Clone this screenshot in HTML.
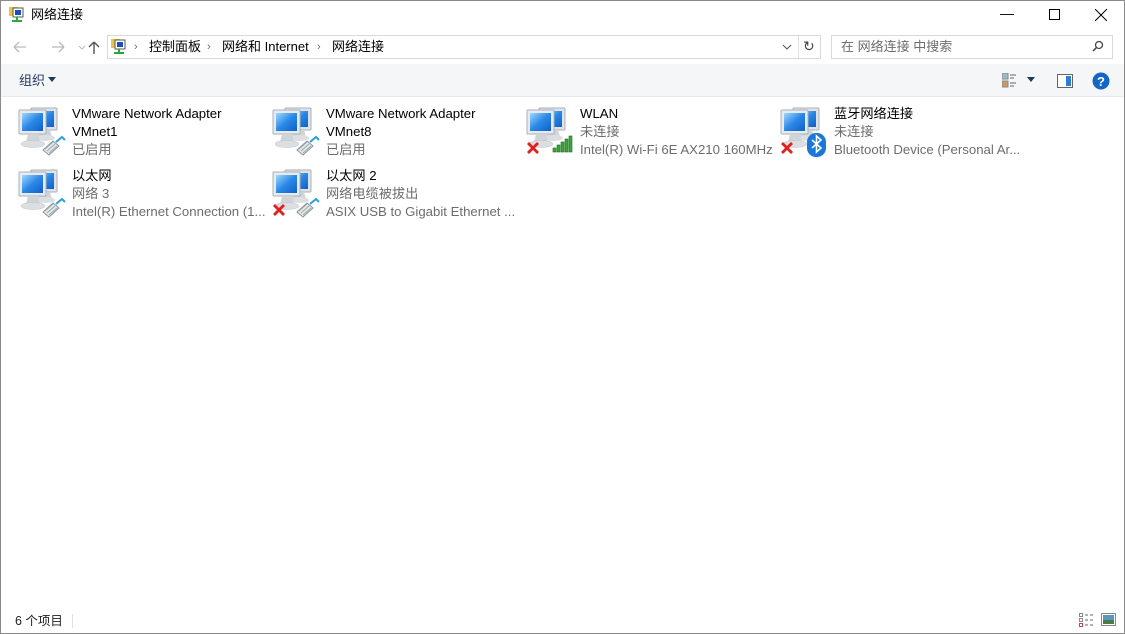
<!DOCTYPE html>
<html><head><meta charset="utf-8"><style>
*{margin:0;padding:0;box-sizing:border-box}
body{width:1125px;height:634px;background:#fff;font-family:"Liberation Sans","Noto Sans CJK SC",sans-serif;font-size:12px;color:#000;position:relative;overflow:hidden}
.abs{position:absolute}
.win{position:absolute;left:0;top:0;width:1125px;height:634px;border:1px solid #8a8a8a}
.t{position:absolute;white-space:nowrap;font-size:13.2px;line-height:18px}
.g{color:#6d6d6d}
</style></head><body>
<div class="win"></div>
<svg width="0" height="0" style="position:absolute">
<defs>
<linearGradient id="scr" x1="0" y1="0" x2="1" y2="1"><stop offset="0" stop-color="#9fd8ff"/><stop offset=".5" stop-color="#2a88e6"/><stop offset="1" stop-color="#1060c8"/></linearGradient>
<g id="mon">
<rect x="15" y="4" width="26" height="22" rx="1" fill="#dfe3e7" stroke="#a8b0b8"/>
<rect x="18" y="7" width="20" height="16" fill="url(#scr)"/>
<path d="M24 26h10l2 7H22z" fill="#cfd4d9"/>
<ellipse cx="29" cy="34" rx="10" ry="3" fill="#dcdfe2"/>
<rect x="3" y="6" width="27" height="24" rx="1" fill="#e8ebee" stroke="#a8b0b8"/>
<rect x="6" y="9" width="21" height="18" fill="url(#scr)"/>
<path d="M12 30h10l2 8H10z" fill="#cfd4d9"/>
<ellipse cx="17" cy="40" rx="12" ry="3.5" fill="#dcdfe2" stroke="#c0c5ca" stroke-width=".5"/>
</g>
<g id="plug">
<path d="M27 46l10-9 6 5-10 9z" fill="#e6e8ea" stroke="#8a939c"/>
<path d="M29 45l8-7M31 47l8-7M33 49l8-7" stroke="#9aa" stroke-width="1"/>
<path d="M40 38l6-5 3 3" fill="none" stroke="#2aa0e0" stroke-width="2"/>
</g>
<g id="x"><path d="M2 0l4 4 4-4 2 2-4 4 4 4-2 2-4-4-4 4-2-2 4-4-4-4z" fill="#e0201f"/></g>
</defs></svg>

<svg class="abs" style="left:8px;top:6px" width="18" height="18"><rect x="1" y="1" width="9" height="9" fill="#e8c54a"/><rect x="5" y="2" width="10" height="9" fill="#fff" stroke="#555"/><rect x="7" y="4" width="6" height="5" fill="#1a4ec0"/><path d="M9 11v4M4 15h10" stroke="#2aa83a" stroke-width="2"/></svg>
<div class="t" style="left:31px;top:6px;font-size:13px">网络连接</div>
<div class="t" style="left:1000px;top:4px;font-size:14px">&#8212;</div>
<div class="abs" style="left:1049px;top:9px;width:11px;height:11px;border:1px solid #000"></div>
<svg class="abs" style="left:1095px;top:9px" width="12" height="12"><path d="M0 0l12 12M12 0L0 12" stroke="#000"/></svg>

<svg class="abs" style="left:10px;top:38px" width="100" height="18"><path d="M4 9h12M4 9l5-5M4 9l5 5" stroke="#bbb" fill="none" stroke-width="1.3"/><path d="M42 9h12M54 9l-5-5M54 9l-5 5" stroke="#bbb" fill="none" stroke-width="1.3"/><path d="M69 8l3 3 3-3" stroke="#bbb" fill="none"/><path d="M84 16V4M84 4l-5 5M84 4l5 5" stroke="#555" fill="none" stroke-width="1.4"/></svg>
<div class="abs" style="left:107px;top:35px;width:714px;height:24px;border:1px solid #d9d9d9"></div>
<svg class="abs" style="left:110px;top:38px" width="17" height="18"><rect x="1" y="1" width="9" height="9" fill="#e8c54a"/><rect x="5" y="2" width="10" height="9" fill="#fff" stroke="#555"/><rect x="7" y="4" width="6" height="5" fill="#1a4ec0"/><path d="M9 11v4M4 15h10" stroke="#2aa83a" stroke-width="2"/></svg>
<div class="t g" style="left:134px;top:38px;font-size:11px">›</div>
<div class="t" style="left:149px;top:38px;font-size:13px">控制面板</div>
<div class="t g" style="left:207px;top:38px;font-size:11px">›</div>
<div class="t" style="left:222px;top:38px;font-size:13px">网络和 Internet</div>
<div class="t g" style="left:317px;top:38px;font-size:11px">›</div>
<div class="t" style="left:332px;top:38px;font-size:13px">网络连接</div>
<div class="abs" style="left:798px;top:36px;width:1px;height:22px;background:#e0e0e0"></div>
<svg class="abs" style="left:781px;top:42px" width="12" height="10"><path d="M2 3l4 4 4-4" stroke="#555" fill="none"/></svg>
<div class="t" style="left:803px;top:37px;font-size:14px;color:#444">↻</div>
<div class="abs" style="left:831px;top:35px;width:282px;height:24px;border:1px solid #d9d9d9"></div>
<div class="t g" style="left:841px;top:38px;font-size:13px">在 网络连接 中搜索</div>
<svg class="abs" style="left:1091px;top:40px" width="14" height="14"><circle cx="8" cy="5" r="3.5" stroke="#444" fill="none" stroke-width="1.3"/><path d="M5.5 7.5L2 11" stroke="#444" stroke-width="1.5"/></svg>

<div class="abs" style="left:1px;top:64px;width:1123px;height:33px;background:#f5f6f7;border-bottom:1px solid #e8e9ea"></div>
<div class="t" style="left:19px;top:72px;font-size:13px;color:#1e395b">组织</div>
<svg class="abs" style="left:48px;top:77px" width="9" height="6"><path d="M0 0h8L4 5z" fill="#1e395b"/></svg>
<svg class="abs" style="left:1002px;top:73px" width="16" height="16"><rect x="0" y="0" width="6" height="6" fill="#9bc" stroke="#888"/><rect x="0" y="8" width="6" height="6" fill="#c96" stroke="#888"/><path d="M8 2h6M8 5h4M8 10h6M8 13h4" stroke="#666"/></svg>
<svg class="abs" style="left:1027px;top:77px" width="9" height="6"><path d="M0 0h8L4 5z" fill="#1e395b"/></svg>
<svg class="abs" style="left:1057px;top:74px" width="16" height="14"><rect x=".5" y=".5" width="15" height="13" fill="#fff" stroke="#666"/><rect x="9" y="2" width="5" height="10" fill="#2e7fd4"/></svg>
<svg class="abs" style="left:1092px;top:72px" width="18" height="18"><circle cx="9" cy="9" r="8.5" fill="#1466c6"/><text x="9" y="14" font-size="13" font-weight="bold" fill="#fff" text-anchor="middle" font-family="Liberation Sans">?</text></svg>

<svg class="abs" style="left:16px;top:104px" width="54" height="54"><use href="#mon"/><use href="#plug"/></svg>
<div class="t" style="left:72px;top:105px">VMware Network Adapter</div>
<div class="t" style="left:72px;top:123px">VMnet1</div>
<div class="t g" style="left:72px;top:141px">已启用</div>

<svg class="abs" style="left:270px;top:104px" width="54" height="54"><use href="#mon"/><use href="#plug"/></svg>
<div class="t" style="left:326px;top:105px">VMware Network Adapter</div>
<div class="t" style="left:326px;top:123px">VMnet8</div>
<div class="t g" style="left:326px;top:141px">已启用</div>

<svg class="abs" style="left:524px;top:104px" width="54" height="54"><use href="#mon"/><use href="#x" x="3" y="38"/><g fill="#3aa83a" stroke="#1d6d1d" stroke-width=".6"><rect x="29" y="44" width="3" height="4"/><rect x="33" y="41" width="3" height="7"/><rect x="37" y="38" width="3" height="10"/><rect x="41" y="35" width="3" height="13"/><rect x="45" y="32" width="3" height="16"/></g></svg>
<div class="t" style="left:580px;top:105px">WLAN</div>
<div class="t g" style="left:580px;top:123px">未连接</div>
<div class="t g" style="left:580px;top:141px">Intel(R) Wi-Fi 6E AX210 160MHz</div>

<svg class="abs" style="left:778px;top:104px" width="54" height="54"><use href="#mon"/><use href="#x" x="3" y="38"/><rect x="29" y="29" width="19" height="24" rx="9" fill="#1a78d8"/><path d="M34 36l9 8-4.5 4V32l4.5 4-9 8" fill="none" stroke="#fff" stroke-width="1.6"/></svg>
<div class="t" style="left:834px;top:105px">蓝牙网络连接</div>
<div class="t g" style="left:834px;top:123px">未连接</div>
<div class="t g" style="left:834px;top:141px">Bluetooth Device (Personal Ar...</div>

<svg class="abs" style="left:16px;top:166px" width="54" height="54"><use href="#mon"/><use href="#plug"/></svg>
<div class="t" style="left:72px;top:167px">以太网</div>
<div class="t g" style="left:72px;top:185px">网络 3</div>
<div class="t g" style="left:72px;top:203px">Intel(R) Ethernet Connection (1...</div>

<svg class="abs" style="left:270px;top:166px" width="54" height="54"><use href="#mon"/><use href="#plug"/><use href="#x" x="3" y="38"/></svg>
<div class="t" style="left:326px;top:167px">以太网 2</div>
<div class="t g" style="left:326px;top:185px">网络电缆被拔出</div>
<div class="t g" style="left:326px;top:203px">ASIX USB to Gigabit Ethernet ...</div>

<div class="t" style="left:15px;top:612px;font-size:12.5px;color:#222">6 个项目</div>
<div class="abs" style="left:72px;top:614px;width:1px;height:14px;background:#e0e0e0"></div>
<svg class="abs" style="left:1079px;top:613px" width="18" height="14"><rect x=".5" y=".5" width="3" height="3" fill="none" stroke="#888"/><rect x=".5" y="5.5" width="3" height="3" fill="none" stroke="#88a"/><rect x=".5" y="10.5" width="3" height="3" fill="none" stroke="#c44"/><path d="M6 2h3M11 2h3M6 7h3M11 7h3M6 12h3M11 12h3" stroke="#666"/></svg>
<svg class="abs" style="left:1101px;top:613px" width="15" height="13"><rect x=".5" y=".5" width="14" height="12" fill="#fff" stroke="#888"/><rect x="2" y="2" width="11" height="9" fill="#5a9ab8"/><rect x="2" y="7" width="11" height="4" fill="#4a7a4a"/></svg>
</body></html>
